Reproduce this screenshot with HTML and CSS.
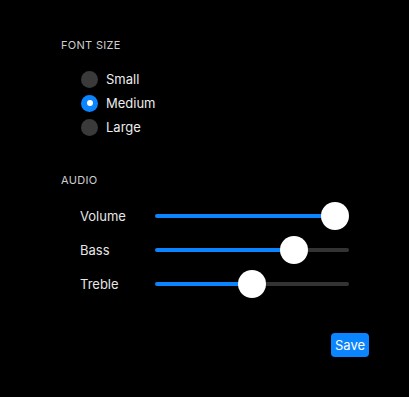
FILE: index.html
```html
<!DOCTYPE html>
<html>
<head>
  <meta charset="utf-8" />
  <title>Settings</title>
  <link rel="stylesheet" href="styles.css">
</head>
<body>
<div id="panel">
  <div class="title">Font Size</div>
  <div class="radios">
    <label class="radio"><input type="radio" name="size" value="small" /><span>Small</span></label>
    <label class="radio"><input type="radio" name="size" value="medium" checked /><span>Medium</span></label>
    <label class="radio"><input type="radio" name="size" value="large" /><span>Large</span></label>
  </div>

  <div class="title audio">Audio</div>
  <div class="sliders">
    <div class="slider"><label for="volume">Volume</label><input type="range" id="volume" min="0" max="100" value="100" style="--v:1" /></div>
    <div class="slider"><label for="bass">Bass</label><input type="range" id="bass" min="0" max="100" value="75" style="--v:0.75" /></div>
    <div class="slider"><label for="treble">Treble</label><input type="range" id="treble" min="0" max="100" value="50" style="--v:0.5" /></div>
  </div>

  <div class="actions"><button class="save">Save</button></div>
</div>
</body>
</html>
```

FILE: styles.css
```css
body {
  margin: 0;
  background: #000;
  font-family: Inter, "Noto Sans", sans-serif;
  color: #e6e6e6;
}
#panel {
  padding: 38px 40px 0 61px;
}
.title {
  font-size: 11px;
  line-height: 14px;
  height: 14px;
  text-transform: uppercase;
  letter-spacing: 0.3px;
  color: #cfcfcf;
}
.title.audio {
  margin-top: 34px;
}
.radios {
  margin: 15px 0 0 20px;
}
.radio {
  display: flex;
  align-items: center;
  height: 24px;
  font-size: 13px;
  color: #ececec;
}
.radio input {
  -webkit-appearance: none;
  appearance: none;
  width: 17px;
  height: 17px;
  margin: 0 8px 0 0;
  border-radius: 50%;
  background: #3a3a3a;
  display: grid;
  place-items: center;
}
.radio input:checked {
  background: #0a84ff;
}
.radio input:checked::after {
  content: "";
  width: 6px;
  height: 6px;
  border-radius: 50%;
  background: #fff;
}
.sliders {
  margin: 12px 0 0 19px;
}
.slider {
  display: flex;
  align-items: center;
  height: 34px;
}
.slider label {
  width: 75px;
  font-size: 13px;
  color: #e6e6e6;
}
.slider input {
  -webkit-appearance: none;
  appearance: none;
  width: 194px;
  height: 28px;
  margin: 0;
  background: transparent;
}
.slider input::-webkit-slider-runnable-track {
  height: 4px;
  border-radius: 2px;
  background: linear-gradient(to right, #0a84ff calc(14px + var(--v) * 166px), #333 calc(14px + var(--v) * 166px));
}
.slider input::-webkit-slider-thumb {
  -webkit-appearance: none;
  width: 28px;
  height: 28px;
  margin-top: -12px;
  border-radius: 50%;
  background: #fff;
  border: none;
}
.actions {
  display: flex;
  justify-content: flex-end;
  margin-top: 32px;
}
.save {
  height: 24px;
  width: 38px;
  padding: 0;
  border: none;
  border-radius: 4px;
  background: #0a84ff;
  color: #fff;
  font-family: inherit;
  font-size: 13px;
}
```
